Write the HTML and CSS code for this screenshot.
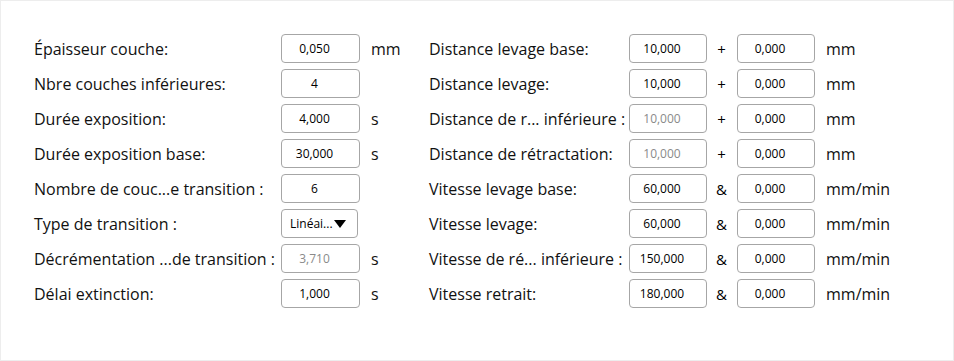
FILE: index.html
```html
<!DOCTYPE html>
<html lang="fr">
<head>
<meta charset="utf-8">
<link rel="stylesheet" href="styles.css">
</head>
<body>
<div class="panel">
  <div class="col col-left">
    <span class="lbl">Épaisseur couche:</span><span class="box">0,050</span><span class="unit">mm</span>
    <span class="lbl">Nbre couches inférieures:</span><span class="box">4</span><span class="unit"></span>
    <span class="lbl">Durée exposition:</span><span class="box">4,000</span><span class="unit">s</span>
    <span class="lbl">Durée exposition base:</span><span class="box">30,000</span><span class="unit">s</span>
    <span class="lbl">Nombre de couc...e transition :</span><span class="box">6</span><span class="unit"></span>
    <span class="lbl">Type de transition :</span><span class="select">Linéai...<svg class="caret" width="12" height="8" viewBox="0 0 12 8"><path d="M0 0H12L6 8Z" fill="#000"/></svg></span><span class="unit"></span>
    <span class="lbl">Décrémentation ...de transition :</span><span class="box dis">3,710</span><span class="unit">s</span>
    <span class="lbl">Délai extinction:</span><span class="box">1,000</span><span class="unit">s</span>
  </div>
  <div class="col col-right">
    <span class="lbl">Distance levage base:</span><span class="box">10,000</span><span class="sep">+</span><span class="box">0,000</span><span class="unit">mm</span>
    <span class="lbl">Distance levage:</span><span class="box">10,000</span><span class="sep">+</span><span class="box">0,000</span><span class="unit">mm</span>
    <span class="lbl">Distance de r... inférieure :</span><span class="box dis">10,000</span><span class="sep">+</span><span class="box">0,000</span><span class="unit">mm</span>
    <span class="lbl">Distance de rétractation:</span><span class="box dis">10,000</span><span class="sep">+</span><span class="box">0,000</span><span class="unit">mm</span>
    <span class="lbl">Vitesse levage base:</span><span class="box">60,000</span><span class="sep">&amp;</span><span class="box">0,000</span><span class="unit">mm/min</span>
    <span class="lbl">Vitesse levage:</span><span class="box">60,000</span><span class="sep">&amp;</span><span class="box">0,000</span><span class="unit">mm/min</span>
    <span class="lbl">Vitesse de ré... inférieure :</span><span class="box">150,000</span><span class="sep">&amp;</span><span class="box">0,000</span><span class="unit">mm/min</span>
    <span class="lbl">Vitesse retrait:</span><span class="box">180,000</span><span class="sep">&amp;</span><span class="box">0,000</span><span class="unit">mm/min</span>
  </div>
</div>
</body>
</html>
```
FILE: styles.css
```css
html, body {
  margin: 0;
  padding: 0;
  background: #fff;
}
body {
  width: 954px;
  height: 361px;
  box-sizing: border-box;
  border: 1px solid #ededed;
  font-family: "Open Sans", "Noto Sans", sans-serif;
  color: #000;
}
.panel {
  display: flex;
  padding: 33px 0 0 33px;
}
.col {
  display: grid;
  grid-auto-rows: 29px;
  row-gap: 6px;
  align-items: center;
}
.col-left {
  grid-template-columns: 247px 79px 11px 58px;
}
.col-left .unit { grid-column: 4; }
.col-right {
  grid-template-columns: 200px 78px 30px 78px 11px auto;
}
.col-right .unit { grid-column: 6; }
.lbl, .unit {
  font-size: 16px;
  white-space: nowrap;
  line-height: 29px;
  align-self: start;
  padding-top: 1px;
  color: #111;
}
.col-left .box, .col-left .select { grid-column: 2; }
.box, .select {
  box-sizing: border-box;
  height: 29px;
  border: 1px solid #a6a6a6;
  border-radius: 4px;
  font-size: 12px;
  display: flex;
  align-items: center;
  justify-content: center;
  padding-right: 12px;
  background: #fff;
}
.box.dis { color: #8a8a8a; }
.select {
  width: 77px;
  justify-content: flex-start;
  padding: 0 0 0 8px;
}
.caret { margin-left: 1px; }
.sep {
  font-size: 15px;
  text-align: center;
  padding-right: 1px;
}
```
